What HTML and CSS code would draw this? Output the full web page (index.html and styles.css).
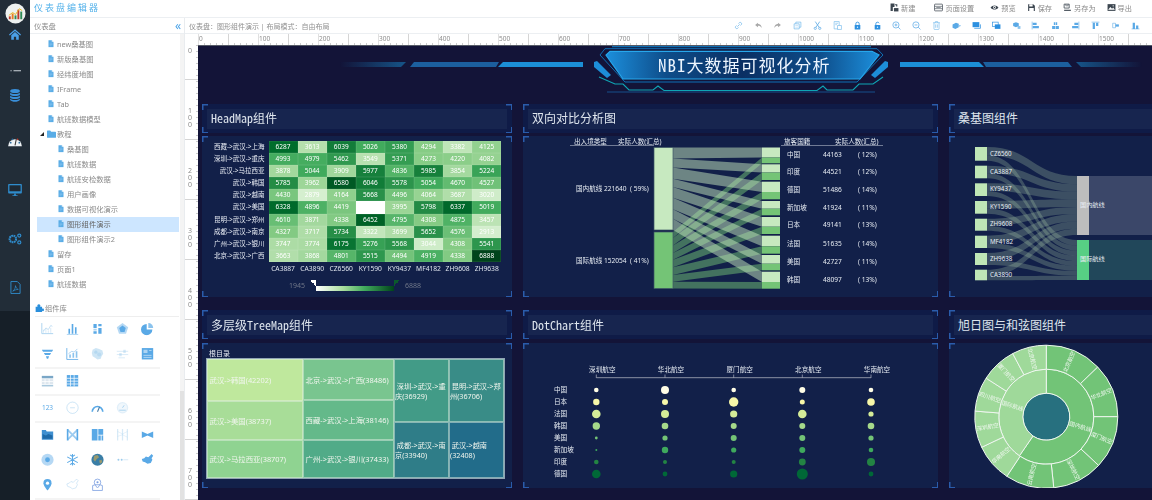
FILE: index.html
```html
<!DOCTYPE html>
<html lang="zh">
<head>
<meta charset="utf-8">
<title>仪表盘编辑器</title>
<link rel="stylesheet" href="styles.css">
</head>
<body>
<svg class="defs" aria-hidden="true">
  <symbol id="file" viewBox="0 0 12 14"><path d="M1 0h6.5L11 3.5V14H1z" fill="currentColor"/><path d="M7.5 0v3.5H11z" fill="#fff" opacity=".7"/><path d="M3 6h6M3 8.5h6M3 11h4" stroke="#fff" stroke-width=".7" opacity=".5"/></symbol>
  <symbol id="folder" viewBox="0 0 14 12"><path d="M0 1.5A1 1 0 0 1 1 .5h4l1.5 2H13a1 1 0 0 1 1 1V11a1 1 0 0 1-1 1H1a1 1 0 0 1-1-1z" fill="currentColor"/></symbol>
  <symbol id="puzzle" viewBox="0 0 14 14"><path d="M1 6h3c-1-2 0-4 2-4s3 2 2 4h3v3c2-1 3 0 3 2s-2 2-3 1v2H1z" fill="currentColor"/></symbol>
  <symbol id="line" viewBox="0 0 16 16"><path d="M1 1v13h14" fill="none" stroke="currentColor"/><path d="M3 11l3-4 3 2 3-5 2 1" fill="none" stroke="currentColor" opacity=".7"/><path d="M3 13V9m3 4V8m3 5v-3m3 3V7" stroke="currentColor" opacity=".45"/></symbol>
  <symbol id="bars" viewBox="0 0 16 16"><path d="M3 8h2v6H3zM7 2h2v12H7zM11 6h2v8h-2z" fill="currentColor"/><path d="M1 15h14" stroke="currentColor" opacity=".6"/></symbol>
  <symbol id="stack" viewBox="0 0 16 16"><path d="M3 2h4v5H3zM9 2h4v3H9zM9 7h4v7H9zM3 11h4v3H3z" fill="currentColor"/><path d="M3 8h4v2H3z" fill="currentColor" opacity=".5"/></symbol>
  <symbol id="radar" viewBox="0 0 16 16"><path d="M8 1l7 5-2.700 8H3.700L1 6z" fill="currentColor" opacity=".45"/><path d="M8 4l4 3-1.500 5h-5L4 7z" fill="currentColor"/></symbol>
  <symbol id="pie" viewBox="0 0 16 16"><path d="M7 2a7 7 0 1 0 7 7H7z" fill="currentColor"/><path d="M9 1a6 6 0 0 1 6 6H9z" fill="currentColor" opacity=".7"/></symbol>
  <symbol id="funnel" viewBox="0 0 16 16"><path d="M1 3h14l-1.500 2.500h-11zM3.500 7h9L11 9.500H5zM6 11h4l-1.200 3H7.200z" fill="currentColor"/></symbol>
  <symbol id="combo" viewBox="0 0 16 16"><path d="M1 1v14h14" fill="none" stroke="currentColor"/><path d="M4 13V9h2v4zM8 13V7h2v6zM12 13V5h2v8z" fill="currentColor" opacity=".7"/><path d="M3 8l4-3 3 1 4-4" fill="none" stroke="currentColor" opacity=".6"/></symbol>
  <symbol id="heatmark" viewBox="0 0 16 16"><path d="M2 3l4-2 4 1 4 2 1 4-2 3-1 3-4 1-3-2-3-2-1-4z" fill="currentColor" opacity=".5"/><circle cx="6" cy="6" r="2" fill="currentColor" opacity=".5"/><circle cx="10" cy="9" r="2.500" fill="currentColor" opacity=".4"/></symbol>
  <symbol id="slide" viewBox="0 0 16 16"><path d="M1 5h14M1 9h14M3 13h8" stroke="currentColor" opacity=".45"/><path d="M9 3h3v4H9zM4 7h3v4H4z" fill="currentColor" opacity=".4"/></symbol>
  <symbol id="img" viewBox="0 0 16 16"><rect x="1" y="1" width="14" height="14" fill="currentColor"/><path d="M3 3h5v4H3z" fill="#fff" opacity=".5"/><path d="M3 10h10M3 12.500h10M10 4h3" stroke="#fff" opacity=".6"/></symbol>
  <symbol id="cal" viewBox="0 0 16 16"><rect x="1" y="2" width="14" height="3" fill="#7aa7c7"/><rect x="1" y="6" width="14" height="6" fill="#dde6ee"/><path d="M1 9h14M5 6v6M10 6v6" stroke="#fff"/><rect x="1" y="13" width="14" height="2" fill="#a9c8dd"/></symbol>
  <symbol id="grid" viewBox="0 0 16 16"><rect x="1" y="1" width="14" height="14" fill="currentColor"/><path d="M1 5h14M1 8.500h14M1 12h14M5.500 1v14M10 1v14" stroke="#fff" stroke-width=".9"/></symbol>
  <symbol id="dial" viewBox="0 0 16 16"><circle cx="8" cy="8" r="7" fill="none" stroke="currentColor" opacity=".6"/><path d="M5 8h6" stroke="currentColor" opacity=".6"/></symbol>
  <symbol id="gauge" viewBox="0 0 16 16"><path d="M1.500 13a6.500 6.500 0 1 1 13 0" fill="none" stroke="currentColor" stroke-width="2"/><path d="M8 13l2.500-6" stroke="#3f78a5" stroke-width="1.300"/></symbol>
  <symbol id="clock" viewBox="0 0 16 16"><circle cx="8" cy="8" r="7" fill="currentColor" opacity=".3"/><circle cx="8" cy="8" r="5.500" fill="#fff" opacity=".5"/><path d="M4 11h8M8 8l2-3" stroke="currentColor"/></symbol>
  <symbol id="wmap" viewBox="0 0 16 16"><path d="M1 2h5l1 2h8v10H1z" fill="#3f8fd0"/><path d="M2 7l4 2 3-2 5 2v4H2z" fill="#1f6aa8"/></symbol>
  <symbol id="sankeymark" viewBox="0 0 16 16"><path d="M2 1v14M14 1v14" stroke="currentColor" stroke-width="2"/><path d="M2 2l12 12M14 2L2 14" stroke="currentColor" stroke-width="2.200" opacity=".6"/></symbol>
  <symbol id="tree" viewBox="0 0 16 16"><path d="M1 1h7v14H1zM9 1h6v7H9zM9 9h3v6H9zM13 9h2v6h-2z" fill="currentColor"/></symbol>
  <symbol id="para" viewBox="0 0 16 16"><path d="M2 1v14M8 1v14M14 1v14" stroke="currentColor" stroke-width="1.500" opacity=".4"/><path d="M2 4l6 3 6-3M2 10l6-2 6 3" stroke="currentColor" opacity=".3" fill="none"/></symbol>
  <symbol id="bow" viewBox="0 0 16 16"><path d="M1 4l7 3 7-3v8L8 9l-7 3z" fill="currentColor"/></symbol>
  <symbol id="sun" viewBox="0 0 16 16"><circle cx="8" cy="8" r="7.500" fill="currentColor" opacity=".45"/><circle cx="8" cy="8" r="3" fill="currentColor"/></symbol>
  <symbol id="snow" viewBox="0 0 16 16"><path d="M8 1v14M1.500 4.500l13 7M14.500 4.500l-13 7M5 2l3 2 3-2M5 14l3-2 3 2" stroke="currentColor" stroke-width="1.300" fill="none"/></symbol>
  <symbol id="globe" viewBox="0 0 16 16"><circle cx="8" cy="8" r="7.500" fill="#3a7ea6"/><path d="M4 3l4-1 2 3-3 2-2 3-2-2zM10 9l3-1 1 3-3 2z" fill="#9a9a6e"/></symbol>
  <symbol id="dotsmark" viewBox="0 0 16 16"><circle cx="3" cy="8" r="1.200" fill="currentColor"/><circle cx="7" cy="8" r="1.200" fill="currentColor"/><path d="M9 8h6" stroke="currentColor" opacity=".5"/></symbol>
  <symbol id="china" viewBox="0 0 16 16"><path d="M1 7l3-1 2-2 3 1 2-2 2-2 2 2-2 3 1 2-2 4-4 1-3-2-3-1z" fill="currentColor"/></symbol>
  <symbol id="chinao" viewBox="0 0 16 16"><path d="M1 7l3-1 2-2 3 1 2-2 2-2 2 2-2 3 1 2-2 4-4 1-3-2-3-1z" fill="none" stroke="currentColor" opacity=".5"/></symbol>
  <symbol id="pin" viewBox="0 0 16 16"><path d="M8 1a5 5 0 0 1 5 5c0 3-5 9-5 9S3 9 3 6a5 5 0 0 1 5-5z" fill="currentColor"/><circle cx="8" cy="6" r="2" fill="#fff"/></symbol>
  <symbol id="pinmap" viewBox="0 0 16 16"><path d="M2 9l3-1h6l3 1v6H2z" fill="none" stroke="#7b9fe0"/><path d="M8 1a4 4 0 0 1 4 4c0 2.500-4 7-4 7S4 7.500 4 5a4 4 0 0 1 4-4z" fill="none" stroke="#7b9fe0"/><circle cx="8" cy="5" r="1.300" fill="#7b9fe0"/></symbol>
  <symbol id="link" viewBox="0 0 16 16"><path d="M6 10l4-4M4.500 8L3 9.500a2.500 2.500 0 0 0 3.500 3.500L8 11.500M8 4.500L9.500 3A2.500 2.500 0 0 1 13 6.500L11.500 8" fill="none" stroke="currentColor" stroke-width="1.300"/></symbol>
  <symbol id="undo" viewBox="0 0 16 16"><path d="M7 3L2 7l5 4V8.500c3 0 5 1 7 4-.5-4-3-7-7-7.500z" fill="currentColor"/></symbol>
  <symbol id="redo" viewBox="0 0 16 16"><path d="M9 3l5 4-5 4V8.500c-3 0-5 1-7 4 .5-4 3-7 7-7.500z" fill="currentColor"/></symbol>
  <symbol id="copy" viewBox="0 0 16 16"><path d="M5 2h9v9H5z" fill="none" stroke="currentColor" stroke-width="1.200"/><path d="M2 5h9v9H2z" fill="#fff" stroke="currentColor" stroke-width="1.200"/><path d="M4 8h5M4 11h5" stroke="currentColor" opacity=".6"/></symbol>
  <symbol id="cut" viewBox="0 0 16 16"><circle cx="4" cy="13" r="2" fill="none" stroke="currentColor" stroke-width="1.300"/><circle cx="12" cy="13" r="2" fill="none" stroke="currentColor" stroke-width="1.300"/><path d="M5 11.500L12 1M11 11.500L4 1" stroke="currentColor" stroke-width="1.400"/></symbol>
  <symbol id="paste" viewBox="0 0 16 16"><path d="M2 1h9v13H2z" fill="none" stroke="currentColor" stroke-width="1.100"/><path d="M8 8h7v7H8z" fill="#fff" stroke="currentColor" stroke-width="1.100"/><path d="M4 4h5M4 6.500h3" stroke="currentColor"/></symbol>
  <symbol id="lock" viewBox="0 0 16 16"><rect x="3" y="7" width="10" height="8" rx="1" fill="currentColor"/><path d="M5 7V5a3 3 0 0 1 6 0v2" fill="none" stroke="currentColor" stroke-width="1.500"/><circle cx="8" cy="11" r="1.200" fill="#fff"/></symbol>
  <symbol id="unlock" viewBox="0 0 16 16"><rect x="3" y="7" width="10" height="8" rx="1" fill="currentColor"/><path d="M5 7V5a3 3 0 0 1 5.800-1" fill="none" stroke="currentColor" stroke-width="1.500"/><circle cx="8" cy="11" r="1.200" fill="#fff"/></symbol>
  <symbol id="zin" viewBox="0 0 16 16"><circle cx="7" cy="7" r="5.500" fill="none" stroke="currentColor" stroke-width="1.300"/><path d="M11 11l4 4M4.500 7h5M7 4.500v5" stroke="currentColor" stroke-width="1.300"/></symbol>
  <symbol id="zout" viewBox="0 0 16 16"><circle cx="7" cy="7" r="5.500" fill="none" stroke="currentColor" stroke-width="1.300"/><path d="M11 11l4 4M4.500 7h5" stroke="currentColor" stroke-width="1.300"/></symbol>
  <symbol id="trash" viewBox="0 0 16 16"><path d="M2 3h12M6 3V1h4v2M3.500 3v11a1 1 0 0 0 1 1h7a1 1 0 0 0 1-1V3M6.500 6v6M9.500 6v6" fill="none" stroke="currentColor" stroke-width="1.100"/></symbol>
  <symbol id="lay1" viewBox="0 0 16 16"><path d="M1 6l6-3 5 2v6l-6 3-5-2z" fill="currentColor"/><path d="M13 7l3 1.500-3 1.500z" fill="currentColor"/></symbol>
  <symbol id="lay2" viewBox="0 0 16 16"><rect x="1" y="2" width="12" height="9" fill="currentColor"/><path d="M4 13h11V6" fill="none" stroke="currentColor" stroke-width="1.300"/></symbol>
  <symbol id="lay3" viewBox="0 0 16 16"><rect x="1" y="2" width="10" height="8" fill="none" stroke="currentColor" stroke-width="1.200"/><rect x="5" y="6" width="10" height="8" fill="currentColor"/></symbol>
  <symbol id="lay4" viewBox="0 0 16 16"><path d="M2 4l5-2 5 2v5l-5 2-5-2z" fill="currentColor"/><rect x="10" y="9" width="5" height="5" fill="currentColor" opacity=".7"/></symbol>
  <symbol id="al1" viewBox="0 0 16 16"><path d="M2 1v14" stroke="currentColor"/><path d="M3 3h7v4H3zM3 9h11v4H3z" fill="currentColor"/></symbol>
  <symbol id="al2" viewBox="0 0 16 16"><path d="M5 2h6v5H5zM2 9h12v5H2z" fill="currentColor"/><path d="M8 1v14" stroke="#fff"/></symbol>
  <symbol id="al3" viewBox="0 0 16 16"><path d="M14 1v14" stroke="currentColor"/><path d="M6 3h7v4H6zM2 9h11v4H2z" fill="currentColor"/></symbol>
  <symbol id="al4" viewBox="0 0 16 16"><path d="M1 2h14" stroke="currentColor"/><path d="M3 3h4v11H3zM9 3h4v6H9z" fill="currentColor"/></symbol>
  <symbol id="al5" viewBox="0 0 16 16"><path d="M3 4h5v8H3z" fill="none" stroke="currentColor"/><path d="M8 6h6v4H8z" fill="currentColor"/></symbol>
  <symbol id="al6" viewBox="0 0 16 16"><path d="M1 14h14" stroke="currentColor"/><path d="M3 3h4v11H3zM9 8h4v6H9z" fill="currentColor"/></symbol>
  <symbol id="adoc" viewBox="0 0 16 16"><path d="M2 2h9l3 3v9H2z" fill="currentColor"/><path d="M4 2h6v4H4zM4 9h8v5H4z" fill="#fff"/></symbol>
  <symbol id="anew" viewBox="0 0 16 16"><path d="M1 1h7v6H5v7H1z" fill="currentColor"/><path d="M7 9h8v6H7z" fill="currentColor"/><path d="M9 3h3v3" stroke="currentColor" fill="none" stroke-width="2"/></symbol>
  <symbol id="apage" viewBox="0 0 16 16"><rect x="1" y="2" width="14" height="12" rx="1" fill="none" stroke="currentColor" stroke-width="1.300"/><path d="M1 6h14M1 10h14" stroke="currentColor"/><rect x="4" y="7.500" width="8" height="1" fill="currentColor"/></symbol>
  <symbol id="aeye" viewBox="0 0 16 16"><path d="M1 8c3-5 11-5 14 0-3 5-11 5-14 0z" fill="currentColor"/><circle cx="8" cy="8" r="2.500" fill="#fff"/><circle cx="8" cy="8" r="1.300" fill="currentColor"/></symbol>
  <symbol id="asaveas" viewBox="0 0 16 16"><path d="M2 2h9v7H2z" fill="none" stroke="currentColor" stroke-width="1.400"/><path d="M5 2v3h4V2" stroke="currentColor" fill="none"/><path d="M2 12h12v2H2z" fill="currentColor"/></symbol>
  <symbol id="aimg" viewBox="0 0 16 16"><rect x="1" y="2" width="14" height="12" fill="currentColor"/><path d="M2 12l4-5 3 3 2-2 3 4z" fill="#fff"/><circle cx="11" cy="5" r="1.200" fill="#fff"/></symbol>
</svg>

<div class="app">
  <nav class="rail">
    <svg class="logo" viewBox="0 0 22 22"><circle cx="11" cy="11" r="10.500" fill="#eef1f0"/><path d="M4 14h2v3H4z" fill="#c0392b"/><path d="M7 11h2v6H7z" fill="#e67e22"/><path d="M10 13h2v4h-2z" fill="#2e8b57"/><path d="M13 7h2v10h-2z" fill="#c0392b"/><path d="M16 9h2v8h-2z" fill="#2e8b57"/><path d="M4 13l4-3 3 2 4-6 3 2" fill="none" stroke="#e8b923"/></svg>
    <svg class="ri home" viewBox="0 0 16 14"><path d="M8 0l8 7-1 1.200-7-6-7 6L0 7z" fill="#4a9fe6"/><path d="M3 8l5-4.500L13 8v6H9.500v-4h-3v4H3z" fill="#4a9fe6"/></svg>
    <svg class="ri dash" viewBox="0 0 16 2"><path d="M2 0h1.500v1.200H2zM6 0h10v1.200H6z" fill="#cfd6dc"/></svg>
    <svg class="ri db" viewBox="0 0 14 16"><ellipse cx="7" cy="2.500" rx="6" ry="2.500" fill="#3a8fd9"/><path d="M1 4.500c2 2 10 2 12 0v2.500c-2 2-10 2-12 0zM1 8.200c2 2 10 2 12 0v2.500c-2 2-10 2-12 0zM1 11.900c2 2 10 2 12 0v1.600c-2 3-10 3-12 0z" fill="#3a8fd9"/></svg>
    <svg class="ri gau" viewBox="0 0 16 14"><path d="M0 13a8 8 0 1 1 16 0z" fill="#eef2f5"/><circle cx="3" cy="9" r="1" fill="#2f6e9e"/><circle cx="5" cy="5" r="1" fill="#2f6e9e"/><circle cx="11" cy="5" r="1" fill="#c0392b"/><circle cx="13" cy="9" r="1" fill="#2f6e9e"/><path d="M8 12l1.500-7" stroke="#333" stroke-width="1.200"/></svg>
    <svg class="ri mon" viewBox="0 0 16 14"><path d="M1 0h14a1 1 0 0 1 1 1v9a1 1 0 0 1-1 1H1a1 1 0 0 1-1-1V1a1 1 0 0 1 1-1z" fill="#2f8ccc"/><path d="M1.500 1.500h13v7h-13z" fill="#1e2934"/><path d="M5 13h6v1H5zM7 11h2v2H7z" fill="#2f8ccc"/></svg>
    <svg class="ri gears" viewBox="0 0 16 14"><circle cx="5.500" cy="7" r="3.800" fill="none" stroke="#2f8ccc" stroke-width="2.400" stroke-dasharray="2 .6"/><circle cx="13" cy="3" r="1.800" fill="none" stroke="#2f8ccc" stroke-width="1.400"/><circle cx="13" cy="11" r="1.800" fill="none" stroke="#2f8ccc" stroke-width="1.400"/></svg>
    <svg class="ri pdf" viewBox="0 0 12 14"><path d="M1 .5h7l3 3v10H1z" fill="none" stroke="#2f8ccc" stroke-width="1"/><path d="M3 11c2-1 3-4 3-6 0 2 2 4 3 4-2 0-4 1-6 2z" fill="none" stroke="#2f8ccc" stroke-width=".8"/></svg>
  </nav>

  <div class="shell">
    <header class="topbar">
      <span class="app-title">仪表盘编辑器</span>
      <div class="actions">
        <span class="action first"><svg><use href="#anew"/></svg>新建</span>
        <span class="action second"><svg><use href="#apage"/></svg>页面设置</span>
        <span class="action"><svg><use href="#aeye"/></svg>预览</span>
        <span class="action"><svg><use href="#adoc"/></svg>保存</span>
        <span class="action"><svg><use href="#asaveas"/></svg>另存为</span>
        <span class="action"><svg><use href="#aimg"/></svg>导出</span>
      </div>
    </header>

    <div class="body">
      <aside class="side">
        <div class="side-head"><span>仪表盘</span><b class="collapse">«</b></div>
        <ul class="tree">
          <li><svg><use href="#file"/></svg>new桑基图</li>
          <li><svg><use href="#file"/></svg>新版桑基图</li>
          <li><svg><use href="#file"/></svg>经纬度地图</li>
          <li><svg><use href="#file"/></svg>IFrame</li>
          <li><svg><use href="#file"/></svg>Tab</li>
          <li><svg><use href="#file"/></svg>航班数据模型</li>
          <li class="open"><i class="arrow"></i><svg class="fold"><use href="#folder"/></svg>教程</li>
          <li class="sub"><svg><use href="#file"/></svg>桑基图</li>
          <li class="sub"><svg><use href="#file"/></svg>航班数据</li>
          <li class="sub"><svg><use href="#file"/></svg>航班安检数据</li>
          <li class="sub"><svg><use href="#file"/></svg>用户画像</li>
          <li class="sub"><svg><use href="#file"/></svg>数据可视化演示</li>
          <li class="sub sel"><svg><use href="#file"/></svg>图形组件演示</li>
          <li class="sub"><svg><use href="#file"/></svg>图形组件演示2</li>
          <li><svg><use href="#file"/></svg>留存</li>
          <li><svg><use href="#file"/></svg>页面1</li>
          <li><svg><use href="#file"/></svg>航班数据</li>
        </ul>
        <div class="lib-head"><svg><use href="#puzzle"/></svg>组件库</div>
        <div class="lib">
          <div class="lib-group">
            <svg class="dim"><use href="#line"/></svg><svg><use href="#bars"/></svg><svg><use href="#stack"/></svg><svg><use href="#radar"/></svg><svg><use href="#pie"/></svg>
            <svg><use href="#funnel"/></svg><svg><use href="#combo"/></svg><svg class="dim"><use href="#heatmark"/></svg><svg class="dim"><use href="#slide"/></svg><svg><use href="#img"/></svg>
          </div>
          <div class="lib-group">
            <svg><use href="#cal"/></svg><svg><use href="#grid"/></svg>
          </div>
          <div class="lib-group">
            <span class="num">123</span><svg class="dim"><use href="#dial"/></svg><svg><use href="#gauge"/></svg><svg class="dim"><use href="#clock"/></svg>
          </div>
          <div class="lib-group">
            <svg><use href="#wmap"/></svg><svg><use href="#sankeymark"/></svg><svg><use href="#tree"/></svg><svg class="dim"><use href="#para"/></svg><svg><use href="#bow"/></svg>
            <svg><use href="#sun"/></svg><svg><use href="#snow"/></svg><svg><use href="#globe"/></svg><svg class="dim"><use href="#dotsmark"/></svg><svg><use href="#china"/></svg>
            <svg><use href="#pin"/></svg><svg class="dim"><use href="#chinao"/></svg><svg><use href="#pinmap"/></svg>
          </div>
        </div>
      </aside>

      <main class="work">
        <div class="work-head">
          <span class="crumb">仪表盘：图形组件演示 | 布局模式：自由布局</span>
          <div class="tools">
            <svg class="soft"><use href="#link"/></svg><svg class="gray"><use href="#undo"/></svg><svg class="gray"><use href="#redo"/></svg><svg class="soft"><use href="#copy"/></svg><svg><use href="#cut"/></svg><svg class="soft"><use href="#paste"/></svg><svg class="strong"><use href="#lock"/></svg><svg class="strong"><use href="#unlock"/></svg><svg><use href="#zin"/></svg><svg><use href="#zout"/></svg><svg class="soft"><use href="#trash"/></svg><svg><use href="#lay1"/></svg><svg class="strong"><use href="#lay2"/></svg><svg class="strong"><use href="#lay3"/></svg><svg><use href="#lay4"/></svg><svg><use href="#al1"/></svg><svg><use href="#al2"/></svg><svg><use href="#al3"/></svg><svg><use href="#al4"/></svg><svg><use href="#al5"/></svg><svg><use href="#al6"/></svg>
          </div>
        </div>
        <div class="ruler-top">
          <span>0</span><span>100</span><span>200</span><span>300</span><span>400</span><span>500</span><span>600</span><span>700</span><span>800</span><span>900</span><span>1000</span><span>1100</span><span>1200</span><span>1300</span><span>1400</span><span>1500</span>
        </div>
        <div class="stage">
          <div class="ruler-left">
            <span>0</span><span>100</span><span>200</span><span>300</span><span>400</span><span>500</span><span>600</span><span>700</span>
          </div>
          <div class="canvas">
            <div class="banner">
              <svg viewBox="198 44 954 59" class="banner-art">
                <defs>
                  <linearGradient id="bfill" x1="0" x2="1" y1="0" y2="0"><stop offset="0" stop-color="#1c8fdc"/><stop offset=".22" stop-color="#0e4d8a"/><stop offset=".5" stop-color="#0a2f63"/><stop offset=".78" stop-color="#0e4d8a"/><stop offset="1" stop-color="#1c8fdc"/></linearGradient>
                  <linearGradient id="fadeL" x1="0" x2="1" y1="0" y2="0"><stop offset="0" stop-color="#1aa4ec" stop-opacity="0"/><stop offset="1" stop-color="#1aa4ec"/></linearGradient>
                  <linearGradient id="fadeR" x1="1" x2="0" y1="0" y2="0"><stop offset="0" stop-color="#1aa4ec" stop-opacity="0"/><stop offset="1" stop-color="#1aa4ec"/></linearGradient>
                </defs>
                <path d="M340 60h66l-5 5h-61z" fill="url(#fadeL)" opacity=".45"/>
                <path d="M414 60h85l-3 5h-86z" fill="#1c5f9e"/>
                <path d="M503 60h80v5h-85z" fill="#1c8fd6"/>
                <path d="M1142 60h-66l5 5h61z" fill="url(#fadeR)" opacity=".45"/>
                <path d="M1068 60h-85l3 5h86z" fill="#1c5f9e"/>
                <path d="M979 60h-79v5h84z" fill="#1c8fd6"/>
                <path d="M612 44.500h259" stroke="#0f6fb4" stroke-width="1.600"/>
                <path d="M605 46.700h272l6 6.300-26 27H625l-25-27z" fill="none" stroke="#0f6fb4" stroke-width="1"/>
                <path d="M610 49.300h262l7 3.700-19 24H623l-17-24z" fill="url(#bfill)" stroke="#27a7ec" stroke-width="1.200"/>
                <path d="M594 60l3-1 14 14-4 3-13-11z" fill="#1d8ed8"/>
                <path d="M888 60l-3-1-14 14 4 3 13-11z" fill="#1d8ed8"/>
                <path d="M599 75l16 7h8l6 6h24l5-4 6 4.500h153l6-4.500 4 4h26l6-6h14l10-7" fill="none" stroke="#0fa5b4" stroke-width="1.100"/>
                <path d="M607 90h268" stroke="#174f8a" stroke-width="1"/>
              </svg>
              <h1>NBI大数据可视化分析</h1>
            </div>

            <div class="board">
              <section class="panel">
                <div class="bracket panel-title"><h2>HeadMap组件</h2></div>
                <div class="bracket panel-body heat-body">
                  <div class="heat" id="heatmap"></div>
                  <div class="legend">
                    <span>1945</span>
                    <i class="tri tri-l"></i>
                    <i class="ramp"></i>
                    <i class="tri tri-r"></i>
                    <span>6888</span>
                  </div>
                </div>
              </section>
              <section class="panel">
                <div class="bracket panel-title"><h2>双向对比分析图</h2></div>
                <div class="bracket panel-body"><svg id="bi" class="chart" viewBox="523 135 415 161"></svg></div>
              </section>
              <section class="panel">
                <div class="bracket panel-title"><h2>桑基图组件</h2></div>
                <div class="bracket panel-body"><svg id="sankey3" class="chart" viewBox="946 135 300 161"></svg></div>
              </section>

              <section class="panel low">
                <div class="bracket panel-title"><h2>多层级TreeMap组件</h2></div>
                <div class="bracket panel-body tm-body">
                  <div class="tm-root">根目录</div>
                  <div class="tm">
                    <div class="tm-col c1">
                      <div class="cell a1">武汉-&gt;韩国(42202)</div>
                      <div class="cell a2">武汉-&gt;美国(38737)</div>
                      <div class="cell a3">武汉-&gt;马拉西亚(38707)</div>
                    </div>
                    <div class="tm-col c2">
                      <div class="cell b1">北京-&gt;武汉-&gt;广西(38486)</div>
                      <div class="cell b2">西藏-&gt;武汉-&gt;上海(38146)</div>
                      <div class="cell b3">广州-&gt;武汉-&gt;银川(37433)</div>
                    </div>
                    <div class="tm-col c3">
                      <div class="tm-row r1">
                        <div class="cell d1"><span>&nbsp;深圳-&gt;武汉-&gt;重庆(36929)</span></div>
                        <div class="cell d2"><span>&nbsp;昆明-&gt;武汉-&gt;郑州(36706)</span></div>
                      </div>
                      <div class="tm-row r2">
                        <div class="cell d3"><span>&nbsp;成都-&gt;武汉-&gt;南京(33940)</span></div>
                        <div class="cell d4"><span>&nbsp;武汉-&gt;越南<br>(32408)</span></div>
                      </div>
                    </div>
                  </div>
                </div>
              </section>
              <section class="panel low">
                <div class="bracket panel-title"><h2>DotChart组件</h2></div>
                <div class="bracket panel-body"><svg id="dots-chart" class="chart" viewBox="523 342 415 145"></svg></div>
              </section>
              <section class="panel low">
                <div class="bracket panel-title"><h2>旭日图与和弦图组件</h2></div>
                <div class="bracket panel-body"><svg id="sun-chart" class="chart" viewBox="946 342 300 145"></svg></div>
              </section>
            </div>
          </div>
        </div>
      </main>
    </div>
  </div>
</div>
<script src="app.js"></script>
</body>
</html>
```

FILE: styles.css
```css
* { box-sizing: border-box; }
html, body { margin: 0; height: 100%; overflow: hidden; background: #fff; }
body { font-family: "Noto Sans", "Noto Sans CJK SC", sans-serif; font-size: 7.3px; color: #8a8a8a; }
.defs { position: absolute; width: 0; height: 0; }

.app { display: flex; width: 1152px; height: 500px; filter: blur(.3px); }

/* left rail */
.rail { width: 30px; flex: none; display: flex; flex-direction: column; align-items: center; padding-top: 3px;
  background: linear-gradient(#222d38 0 311px, #161f28 311px); }
.logo { width: 21px; height: 21px; }
.ri { display: block; flex: none; }
.home { width: 12px; height: 11px; margin-top: 5px; }
.dash { width: 12px; height: 2px; margin-top: 30px; }
.db { width: 12px; height: 13px; margin-top: 17px; }
.gau { width: 14px; height: 12px; margin-top: 33px; }
.mon { width: 14px; height: 12px; margin-top: 37px; }
.gears { width: 14px; height: 12px; margin-top: 37px; }
.pdf { width: 11px; height: 13px; margin-top: 36px; }

.shell { flex: 1; min-width: 0; display: flex; flex-direction: column; }

/* top bar */
.topbar { height: 18px; flex: none; display: flex; align-items: center; justify-content: space-between; border-bottom: 1px solid #eceff2; padding: 0 20px 2px 4px; }
.app-title { color: #55b2ea; font-size: 9px; letter-spacing: 2px; }
.actions { display: flex; gap: 11px; }
.action { display: flex; align-items: center; gap: 2px; color: #8a8a8a; font-size: 7.2px; line-height: 10px; }
.action svg { width: 9px; height: 9px; color: #3c4650; }
.action.first { margin-right: 8px; }
.action.second { margin-right: 5px; }

.body { flex: 1; min-height: 0; display: flex; }

/* sidebar */
.side { width: 155px; flex: none; display: flex; flex-direction: column; overflow: hidden; border-right: 1px solid #e9ecef; position: relative;
  background: linear-gradient(#e2e2e2, #e2e2e2) right 0 top 373px / 4px 120px no-repeat, linear-gradient(#f4f4f4, #f4f4f4) right 0 top 16px / 4px 100% no-repeat, #fff; }
.side-head { height: 16px; flex: none; display: flex; align-items: center; justify-content: space-between; padding: 0 3px 0 4px; border-bottom: 1px solid #eceff2; background: #fff; color: #8a8a8a; }
.collapse { color: #4aa3e8; font-size: 12px; line-height: 12px; font-weight: 400; }
.tree { list-style: none; margin: 0; padding: 2.500px 0 0; flex: none; }
.tree li { height: 15px; display: flex; align-items: center; gap: 3px; padding-left: 18px; white-space: nowrap; line-height: 15px; }
.tree svg { width: 6px; height: 7.500px; color: #59ace6; flex: none; }
.tree .sub { padding-left: 28px; }
.tree .open { padding-left: 10px; gap: 0; }
.tree .fold { width: 9px; height: 8px; margin: 0 1px 0 3px; }
.arrow { width: 0; height: 0; border-left: 2px solid transparent; border-right: 2px solid #222; border-top: 2px solid transparent; border-bottom: 2px solid #222; }
.tree .sel { background: #cde6ff; margin: 0 5px 0 7px; padding-left: 21px; color: #666; }

.lib-head { height: 17px; margin: 8px 5px 0 5px; flex: none; display: flex; align-items: center; gap: 1px; border-bottom: 1px solid #eee; }
.lib-head svg { width: 9px; height: 9px; color: #2a8fdc; }
.lib { margin: 0 5px 0 5px; }
.lib-group { display: flex; flex-wrap: wrap; width: 125px; border-bottom: 2px solid #f4f4f4; align-content: flex-start; }
.lib-group > * { margin: 5.75px 6px; width: 13px; height: 13.5px; flex: none; color: #5aa9e6; }
.lib-group .dim { color: #9ccbec; }
.num { color: #5aa9e6; font-size: 6.5px; line-height: 14px; text-align: center; }

/* workspace */
.work { flex: 1; min-width: 0; display: flex; flex-direction: column; }
.work-head { height: 16px; flex: none; display: flex; align-items: center; justify-content: space-between; padding: 0 7px 0 4px; border-bottom: 1px solid #eceff2; }
.crumb { font-size: 7px; color: #909090; white-space: nowrap; }
.tools { display: flex; }
.tools svg { width: 9px; height: 9px; margin: 0 5.425px; flex: none; color: #5aa9e6; }
.tools .soft { color: #6db6ea; }
.tools .gray { color: #a8a8a8; }
.tools .strong { color: #2c90e0; }

.ruler-top { height: 11px; flex: none; display: flex; padding-left: 13px; overflow: hidden; font-size: 6.5px; color: #8d8d8d; line-height: 9px;
  background:
    repeating-linear-gradient(90deg, #d5d5d5 0 1px, transparent 1px 60px) 43px 0 / 100% 100% no-repeat,
    repeating-linear-gradient(90deg, #ccc 0 1px, transparent 1px 6px) 13px bottom / 100% 2px no-repeat; }
.ruler-top span { flex: 0 0 60px; border-left: 1px solid #e0e0e0; height: 11px; }

.stage { flex: 1; min-height: 0; display: flex; }
.ruler-left { width: 13px; flex: none; display: flex; flex-direction: column; font-size: 7px; line-height: 7px; color: #8d8d8d;
  background:
    repeating-linear-gradient(0deg, #d5d5d5 0 1px, transparent 1px 60px) 0 0 / 100% 100%,
    repeating-linear-gradient(180deg, #ccc 0 1px, transparent 1px 6px) right top / 2px 100% no-repeat; }
.ruler-left span { flex: 0 0 60px; width: 6px; margin-left: 2px; word-break: break-all; padding-top: 2px; text-align: center; }

.canvas { flex: 1; min-width: 0; overflow: hidden; background: #131438; border-top: 1px solid #555a66; padding-left: 4px; }
.banner { height: 58px; margin-left: -4px; position: relative; display: flex; justify-content: center; }
.banner-art { position: absolute; inset: 0 auto auto 0; width: 954px; height: 59px; }
.banner h1 { position: absolute; left: 460px; top: 8px; margin: 0; font: 400 17px/21px "Noto Sans Mono CJK SC", "DejaVu Sans Mono", "Noto Sans CJK SC", monospace; color: #eef6ff; letter-spacing: 1px; white-space: nowrap; }

.board { display: grid; grid-template-columns: 310px 415px 300px; grid-template-rows: 193px 178px; column-gap: 11px; row-gap: 13px; width: 1040px; }
.panel { display: flex; flex-direction: column; gap: 3px; min-width: 0; }
.panel.low { gap: 4px; }

.bracket { --c: #2a5cab; --l: 6px; --w: 1.5px; background-color: #0f1b47;
  background-image:
    linear-gradient(var(--c), var(--c)), linear-gradient(var(--c), var(--c)),
    linear-gradient(var(--c), var(--c)), linear-gradient(var(--c), var(--c)),
    linear-gradient(var(--c), var(--c)), linear-gradient(var(--c), var(--c)),
    linear-gradient(var(--c), var(--c)), linear-gradient(var(--c), var(--c));
  background-repeat: no-repeat;
  background-size: var(--l) var(--w), var(--w) var(--l), var(--l) var(--w), var(--w) var(--l), var(--l) var(--w), var(--w) var(--l), var(--l) var(--w), var(--w) var(--l);
  background-position: 0 0, 0 0, 100% 0, 100% 0, 0 100%, 0 100%, 100% 100%, 100% 100%; }

.panel-title { height: 29px; flex: none; padding: 4.5px 5px; }
.panel-title h2 { margin: 0; height: 100%; background: #17254f; padding-left: 4px; font: 400 12px/17px "Noto Sans Mono CJK SC", "DejaVu Sans Mono", "Noto Sans CJK SC", monospace; color: #dfe6ee; white-space: nowrap; }
.low .panel-title h2 { line-height: 20px; }
.panel-body { flex: 1; min-height: 0; background-color: #122049; }
.chart { display: block; width: 100%; height: 100%; font-family: "Noto Sans", "Noto Sans CJK SC", sans-serif; }

/* heat map */
.heat-body { padding-top: 4.5px; display: flex; flex-direction: column; }
.heat { display: grid; grid-template-columns: 66.5px repeat(8, 29.1px); grid-auto-rows: 12.2px; font-size: 6.5px; color: #fff; flex: none; }
.heat .lab { text-align: right; padding-right: 4px; line-height: 12.2px; white-space: nowrap; color: #e8ecf4; }
.heat .val { text-align: center; line-height: 12.2px; box-shadow: inset 0 0 0 .5px rgba(255,255,255,.12); }
.heat .xl { text-align: center; font-size: 6.7px; line-height: 14px; height: 14px; color: #dfe4ee; }
.legend { display: flex; align-items: flex-end; margin: 3px 0 0 87px; color: #6f7688; font-size: 7px; line-height: 10px; height: 13px; }
.legend span { width: 20px; }
.legend span:last-child { margin-left: 5px; }
.ramp { width: 78px; height: 5px; background: linear-gradient(90deg, #fff, #a8dd9c 35%, #41ab5d 62%, #00441b); }
.tri { width: 6px; height: 6px; margin-bottom: 5px; }
.tri-l { background: linear-gradient(45deg, transparent 50%, #fff 50%); margin-left: 1px; }
.tri-r { background: linear-gradient(-45deg, transparent 50%, #0a5a2c 50%); }

/* tree map */
.tm-body { padding: 6px 7px 9px 4px; display: flex; flex-direction: column; }
.tm-root { height: 9px; color: #e8ecf4; font-size: 7px; line-height: 9px; padding-left: 3px; flex: none; }
.tm { flex: 1; min-height: 0; display: flex; border: 1px solid #90a4b4; }
.tm-col { display: flex; flex-direction: column; min-width: 0; }
.c1 { width: 96px; } .c2 { width: 91px; } .c3 { flex: 1; }
.tm-row { display: flex; } .r1 { height: 63px; } .r2 { flex: 1; }
.cell { display: flex; align-items: center; color: #f1f6ee; font-size: 7.4px; line-height: 10px; padding: 0 1.5px; border: .5px solid rgba(225,240,225,.5); min-width: 0; }
.r1 .cell, .r2 .cell { width: 50%; padding: 0; font-size: 7.2px; word-break: break-all; }
.a1 { height: 42px; background: #bfe89d; } .a2 { height: 39px; background: #a8dd98; } .a3 { flex: 1; background: #8fd391; }
.b1 { height: 41px; background: #79c58f; } .b2 { height: 40px; background: #64b98a; } .b3 { flex: 1; background: #51ab88; }
.d1 { background: #429b87; } .d2 { background: #398c87; } .d3 { background: #2f7d88; } .d4 { background: #226c8a; }
```

FILE: app.js
```js
var NS = 'http://www.w3.org/2000/svg';
function el(parent, name, attrs, text) {
  var n = document.createElementNS(NS, name);
  for (var k in attrs) n.setAttribute(k, attrs[k]);
  if (text !== undefined) n.textContent = text;
  parent.appendChild(n);
  return n;
}

/* heat map */
var heat = document.getElementById('heatmap');
var rows = ['西藏->武汉->上海','深圳->武汉->重庆','武汉->马拉西亚','武汉->韩国','武汉->越南','武汉->美国','昆明->武汉->郑州','成都->武汉->南京','广州->武汉->银川','北京->武汉->广西'];
var cols = ['CA3887','CA3890','CZ6560','KY1590','KY9437','MF4182','ZH9608','ZH9638'];
var data = [
  [6287,3613,6039,5026,5380,4294,3382,4125],
  [4993,4979,5462,3549,5371,4273,4220,4082],
  [3878,5044,3909,5977,4836,5985,3854,5224],
  [5785,3962,6580,6046,5578,5054,4670,4527],
  [4430,2879,4164,5668,4496,4064,3687,3020],
  [6328,4896,4419,1945,3995,5798,6337,5019],
  [4610,3871,4338,6452,4795,4308,4875,3457],
  [4327,3717,5734,3322,3699,5652,4576,2913],
  [3747,3774,6175,5276,5568,3044,4308,5541],
  [3663,3868,4801,5515,4494,4919,4338,6888]];
var stops = [[0,255,255,255],[.19,213,239,207],[.337,181,224,173],[.475,134,204,133],[.623,65,171,93],[.78,35,139,69],[.878,0,109,44],[1,0,68,27]];
function green(v) {
  var p = (v - 1945) / 4943, i = 0;
  while (i < stops.length - 2 && p > stops[i + 1][0]) i++;
  var a = stops[i], b = stops[i + 1], f = (p - a[0]) / (b[0] - a[0]);
  return 'rgb(' + [1,2,3].map(function (c) { return Math.round(a[c] + (b[c] - a[c]) * f); }).join(',') + ')';
}
function div(cls, text, bg) {
  var d = document.createElement('div');
  d.className = cls; d.textContent = text;
  if (bg) d.style.background = bg;
  heat.appendChild(d);
}
data.forEach(function (r, i) {
  div('lab', rows[i]);
  r.forEach(function (v) { div('val', v, green(v)); });
});
div('xl', '');
cols.forEach(function (c) { div('xl', c); });

/* two-way comparison */
var bi = document.getElementById('bi');
var T = { fill: '#e6ebf2', 'font-size': 6.6 };
function t(svg, x, y, s, extra) {
  var a = Object.assign({ x: x, y: y, 'dominant-baseline': 'middle' }, T, extra || {});
  return el(svg, 'text', a, s);
}
var blocks = [[146.5,156.5,162.3],[163.3,171.5,179],[180.7,191,198.3],[200,207.7,214.3],[216,225.7,233],[234.7,245.3,252.7],[254,262.7,269.3],[270.7,281,287.7]];
var info = [['中国',44163,12],['印度',44521,12],['德国',51486,14],['新加坡',41924,11],['日本',49141,13],['法国',51635,14],['美国',42727,11],['韩国',48097,13]];
var upSum = 0, loSum = 0;
blocks.forEach(function (b) { upSum += b[1] - b[0]; loSum += b[2] - b[1]; });
var uy = 146.5, ly = 231;
blocks.forEach(function (b) {
  var uh = (b[1] - b[0]) / upSum * 82.5, lh = (b[2] - b[1]) / loSum * 56.5;
  el(bi, 'path', { d: 'M673 ' + uy + 'L762 ' + b[0] + 'V' + b[1] + 'L673 ' + (uy + uh) + 'Z', fill: '#c7e9c0', 'fill-opacity': .5 });
  el(bi, 'path', { d: 'M673 ' + ly + 'L762 ' + b[1] + 'V' + b[2] + 'L673 ' + (ly + lh) + 'Z', fill: '#74c476', 'fill-opacity': .5 });
  uy += uh; ly += lh;
});
var S = '#3e5866';
el(bi, 'rect', { x: 654, y: 146.5, width: 19, height: 82.5, fill: '#c7e9c0', stroke: S, 'stroke-width': .7 });
el(bi, 'rect', { x: 654, y: 231, width: 19, height: 56.5, fill: '#74c476', stroke: S, 'stroke-width': .7 });
blocks.forEach(function (b, i) {
  el(bi, 'rect', { x: 762, y: b[0], width: 18, height: b[1] - b[0], fill: '#c7e9c0' });
  el(bi, 'rect', { x: 762, y: b[1], width: 18, height: b[2] - b[1], fill: '#74c476' });
  var y = (b[0] + b[2]) / 2;
  t(bi, 787, y, info[i][0]); t(bi, 823, y, info[i][1]); t(bi, 858, y, '( ' + info[i][2] + '%)');
});
t(bi, 574, 141, '出入境类型'); t(bi, 618, 141, '实际人数(汇总)');
t(bi, 784, 141, '旅客国籍'); t(bi, 835, 141, '实际人数(汇总)');
el(bi, 'path', { d: 'M570 144.5H654M781 144.5H883', stroke: '#8a93a8', 'stroke-width': .8 });
t(bi, 576, 188.5, '国内航线'); t(bi, 604, 188.5, '221640'); t(bi, 630, 188.5, '( 59%)');
t(bi, 576, 260, '国际航线'); t(bi, 604, 260, '152054'); t(bi, 630, 260, '( 41%)');

/* sankey */
var sk = document.getElementById('sankey3');
var src = [[146,159.7,'CZ6560'],[164.7,177.3,'CA3887'],[182.3,195,'KY9437'],[200,212.7,'KY1590'],[217.7,229.7,'ZH9608'],[234.7,247,'MF4182'],[252,264,'ZH9638'],[268.7,279.3,'CA3890']];
var total = 0;
src.forEach(function (s) { total += s[1] - s[0]; });
var gy = 175, ty = 239;
function ribbon(x0, y0, y1, x1, t0, t1) {
  var m = (x0 + x1) / 2;
  return 'M' + x0 + ' ' + y0 + 'C' + m + ' ' + y0 + ' ' + m + ' ' + t0 + ' ' + x1 + ' ' + t0 + 'V' + t1 + 'C' + m + ' ' + t1 + ' ' + m + ' ' + y1 + ' ' + x0 + ' ' + y1 + 'Z';
}
el(sk, 'rect', { x: 1086, y: 175, width: 160, height: 59, fill: '#3b4769' });
el(sk, 'rect', { x: 1086, y: 239, width: 160, height: 40, fill: '#21475a' });
src.forEach(function (s) {
  var h = s[1] - s[0], h1 = h * .6;
  var a = h / total * 59, b = h / total * 40;
  el(sk, 'path', { d: ribbon(984, s[0], s[0] + h1, 1074, gy, gy + a), fill: '#a8c8a8', 'fill-opacity': .28 });
  el(sk, 'path', { d: ribbon(984, s[0] + h1, s[1], 1074, ty, ty + b), fill: '#a8c8a8', 'fill-opacity': .28 });
  gy += a; ty += b;
});
src.forEach(function (s) {
  el(sk, 'rect', { x: 972, y: s[0], width: 12, height: s[1] - s[0], fill: '#bfe6b6' });
  t(sk, 987, (s[0] + s[1]) / 2, s[2], { 'font-size': 6.2 });
});
el(sk, 'rect', { x: 1074, y: 175, width: 12, height: 59, fill: '#bdbdbd' });
el(sk, 'rect', { x: 1074, y: 239, width: 12, height: 40, fill: '#57cf84' });
t(sk, 1077, 204, '国内航线', { 'font-size': 6.2 });
t(sk, 1077, 258, '国际航线', { 'font-size': 6.2 });

/* dots */
var dc = document.getElementById('dots-chart');
var xs = [596.3, 665, 733.7, 802.3, 871];
var air = ['深圳航空','华北航空','厦门航空','北京航空','华南航空'];
var dot = [
  ['中国', '#fffde6', [2.3,4,2.3,3,2.3]],
  ['日本', '#f7f7a8', [3.2,3,4.7,2.5,3.8]],
  ['法国', '#d5ec98', [4.3,4,3.6,4.3,2.6]],
  ['韩国', '#a6d98a', [3.7,3.3,3,3,3.3]],
  ['美国', '#74c476', [1.4,2.6,3,3,2.6]],
  ['新加坡', '#3fa95d', [1,3.2,2.6,3,2.3]],
  ['印度', '#238443', [2.3,2,2,3.4,4]],
  ['德国', '#006837', [4.3,2.4,3.6,5.5,2.4]]];
el(dc, 'path', { d: 'M596.3 376.7H871', stroke: '#8a90a4', 'stroke-width': 1 });
xs.forEach(function (x, i) {
  el(dc, 'path', { d: 'M' + x + ' 373.5V377', stroke: '#9aa0b2', 'stroke-width': .8 });
  t(dc, x + 6, 369.5, air[i], { 'text-anchor': 'middle' });
});
dot.forEach(function (r, j) {
  var y = 389 + j * 12;
  t(dc, 554, y, r[0]);
  r[2].forEach(function (rad, i) { el(dc, 'circle', { cx: xs[i], cy: y, r: rad, fill: r[1] }); });
});

/* sunburst */
var sc = document.getElementById('sun-chart');
var CX = 1043.3, CY = 415.7;
function pt(r, a) { var q = (a - 90) * Math.PI / 180; return [CX + r * Math.cos(q), CY + r * Math.sin(q)]; }
function arc(r0, r1, a0, a1, fill) {
  var p = [pt(r0, a0), pt(r1, a0), pt(r1, a1), pt(r0, a1)], big = a1 - a0 > 180 ? 1 : 0;
  var d = 'M' + p[0] + 'L' + p[1] + 'A' + r1 + ' ' + r1 + ' 0 ' + big + ' 1 ' + p[2] + 'L' + p[3] + 'A' + r0 + ' ' + r0 + ' 0 ' + big + ' 0 ' + p[0] + 'Z';
  el(sc, 'path', { d: d, fill: fill, stroke: '#eef7ee', 'stroke-width': 1 });
}
function radial(r, a, s) {
  var p = pt(r, a), rot = a < 180 ? a - 90 : a + 90;
  el(sc, 'text', { x: p[0], y: p[1], 'text-anchor': 'middle', 'dominant-baseline': 'middle', 'font-size': 5.6, fill: '#eef7ee', transform: 'rotate(' + rot + ' ' + p[0] + ' ' + p[1] + ')' }, s);
}
var A = '#72c477', B = '#9fd99a';
el(sc, 'circle', { cx: CX, cy: CY, r: 23.5, fill: '#27707f', stroke: '#eef7ee', 'stroke-width': 1 });
arc(23.5, 47.5, 0, 214.5, A); arc(23.5, 47.5, 214.5, 360, B);
var ring = [[0,46,'北京航空',A],[46,90,'华北航空',A],[90,133,'厦门航空',A],[133,174,'深圳航空',A],[174,213.5,'云南航空',A],[213.5,244.7,'华南航空',B],[244.7,274.5,'深圳航空',B],[274.5,302.6,'四川航空',B],[302.6,332,'厦门航空',B],[332,360,'北京航空',B]];
ring.forEach(function (s) { arc(47.5, 71.5, s[0], s[1], s[3]); radial(59.5, (s[0] + s[1]) / 2, s[2]); });
radial(35.5, 107, '国内航线');
radial(35.5, 287, '国际航线');
```
